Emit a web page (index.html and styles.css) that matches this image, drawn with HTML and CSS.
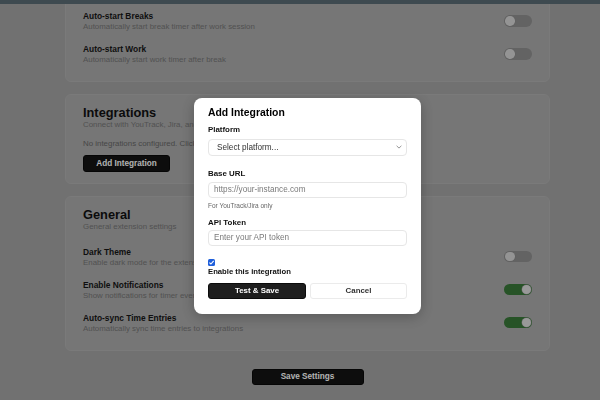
FILE: index.html
```html
<!DOCTYPE html>
<html lang="en">
<head>
<meta charset="utf-8">
<title>Settings</title>
<link rel="stylesheet" href="styles.css">
</head>
<body>
<div class="chrome"></div>
<main class="page">
  <section class="card card-first">
    <div class="rows">
      <div class="row">
        <div class="row-text">
          <div class="row-title">Auto-start Breaks</div>
          <div class="row-desc">Automatically start break timer after work session</div>
        </div>
        <span class="toggle"><span class="knob"></span></span>
      </div>
      <div class="row">
        <div class="row-text">
          <div class="row-title">Auto-start Work</div>
          <div class="row-desc">Automatically start work timer after break</div>
        </div>
        <span class="toggle"><span class="knob"></span></span>
      </div>
    </div>
  </section>

  <section class="card">
    <h2 class="card-title">Integrations</h2>
    <p class="card-desc">Connect with YouTrack, Jira, and more</p>
    <p class="empty-note">No integrations configured. Click below to add one.</p>
    <button class="btn-dark btn-add">Add Integration</button>
  </section>

  <section class="card">
    <h2 class="card-title">General</h2>
    <p class="card-desc">General extension settings</p>
    <div class="rows rows-spaced">
      <div class="row">
        <div class="row-text">
          <div class="row-title">Dark Theme</div>
          <div class="row-desc">Enable dark mode for the extension</div>
        </div>
        <span class="toggle"><span class="knob"></span></span>
      </div>
      <div class="row">
        <div class="row-text">
          <div class="row-title">Enable Notifications</div>
          <div class="row-desc">Show notifications for timer events</div>
        </div>
        <span class="toggle on"><span class="knob"></span></span>
      </div>
      <div class="row">
        <div class="row-text">
          <div class="row-title">Auto-sync Time Entries</div>
          <div class="row-desc">Automatically sync time entries to integrations</div>
        </div>
        <span class="toggle on"><span class="knob"></span></span>
      </div>
    </div>
  </section>

  <div class="actions">
    <button class="btn-dark btn-save">Save Settings</button>
  </div>
</main>

<div class="overlay">
  <div class="modal">
    <h3 class="modal-title">Add Integration</h3>
    <div class="field-label first">Platform</div>
    <div class="select">
      <span>Select platform...</span>
      <svg class="chev" width="6" height="4" viewBox="0 0 6 4"><path d="M0.6 0.8 L3 3.1 L5.4 0.8" fill="none" stroke="#8a8a8a" stroke-width="0.9"/></svg>
    </div>
    <div class="field-label">Base URL</div>
    <div class="input placeholder">https://your-instance.com</div>
    <div class="helper">For YouTrack/Jira only</div>
    <div class="field-label api">API Token</div>
    <div class="input placeholder tight">Enter your API token</div>
    <span class="checkbox">
      <svg width="7" height="7" viewBox="0 0 7 7"><path d="M1.4 3.6 L2.9 5 L5.7 1.9" fill="none" stroke="#fff" stroke-width="1.1"/></svg>
    </span>
    <div class="check-label">Enable this integration</div>
    <div class="modal-buttons">
      <button class="mbtn mbtn-primary">Test &amp; Save</button>
      <button class="mbtn mbtn-secondary">Cancel</button>
    </div>
  </div>
</div>
</body>
</html>
```

FILE: styles.css
```css
* { box-sizing: border-box; }
html, body { margin: 0; height: 100%; }
body {
  font-family: "Liberation Sans", Arial, sans-serif;
  background: #a3a3a3;
  overflow: hidden;
  color: #1c1c1c;
}

.chrome {
  position: fixed;
  top: 0; left: 0; right: 0;
  height: 4px;
  background: #3e4a50;
  z-index: 20;
}

.page {
  width: 485px;
  margin-left: 65px;
  display: flex;
  flex-direction: column;
  gap: 12px;
}

.card {
  background: #a9a9a9;
  border: 1px solid #afafaf;
  border-radius: 6px;
  padding: 11px 17px 11px;
}
.card-first { margin-top: -10px; padding-top: 13px; }

.card-title {
  margin: 0;
  font-size: 12.8px;
  line-height: 14px;
  font-weight: 700;
  color: #111;
}
.card-desc {
  margin: 0;
  font-size: 7.9px;
  line-height: 9px;
  color: #757575;
  white-space: nowrap;
}
.empty-note {
  margin: 9.5px 0 0;
  font-size: 7.9px;
  line-height: 9px;
  color: #666;
  white-space: nowrap;
}

.rows-spaced { margin-top: 9px; }
.row {
  display: flex;
  align-items: center;
  justify-content: space-between;
  padding: 7px 0 6px;
}
.row-title {
  font-size: 8.4px;
  line-height: 10px;
  font-weight: 700;
  color: #161616;
  white-space: nowrap;
}
.row-desc {
  margin-top: 1px;
  font-size: 7.9px;
  line-height: 9px;
  color: #757575;
  white-space: nowrap;
}

.toggle {
  position: relative;
  flex: none;
  width: 28px;
  height: 11.5px;
  border-radius: 6px;
  background: #8e8e8e;
}
.toggle .knob {
  position: absolute;
  top: 1px;
  left: 1px;
  width: 9.5px;
  height: 9.5px;
  border-radius: 50%;
  background: #d4d4d4;
  box-shadow: 0 0 0 0.5px #8a8a8a;
}
.toggle.on { background: #387838; }
.toggle.on .knob { left: auto; right: 1px; background: #dcdcdc; }

.btn-dark {
  font-family: inherit;
  font-weight: 700;
  font-size: 8.2px;
  color: #ffffff;
  background: #141414;
  border: 1px solid #0a0a0a;
  border-radius: 3px;
  padding: 0;
  cursor: pointer;
}
.btn-add {
  display: block;
  margin-top: 7px;
  width: 87px;
  height: 17px;
}
.actions {
  display: flex;
  justify-content: center;
  padding-top: 6px;
}
.btn-save {
  width: 112px;
  height: 16.5px;
}

.overlay {
  position: fixed;
  inset: 0;
  background: rgba(0, 0, 0, 0.3);
  display: flex;
  justify-content: center;
  align-items: flex-start;
  padding: 98px 0 0 15px;
  z-index: 10;
}
.modal {
  width: 227px;
  background: #ffffff;
  border-radius: 8px;
  padding: 9px 14px 15px;
  box-shadow: 0 3px 14px rgba(0, 0, 0, 0.25);
}
.modal-title {
  margin: 0;
  font-size: 10.4px;
  line-height: 12px;
  font-weight: 700;
  color: #000;
}
.field-label {
  margin-top: 13.5px;
  font-size: 7.9px;
  line-height: 10px;
  font-weight: 700;
  color: #111;
}
.field-label.first { margin-top: 6px; }
.field-label.api { margin-top: 8px; }

.select, .input {
  height: 16.5px;
  border: 1px solid #e6e6e6;
  border-radius: 4px;
  display: flex;
  align-items: center;
  font-size: 8.2px;
  color: #333;
}
.select {
  margin-top: 4px;
  padding: 0 4px 0 8px;
  justify-content: space-between;
}
.input {
  margin-top: 2.5px;
  height: 16px;
  padding-left: 5px;
}
.input.tight { margin-top: 2px; }
.placeholder { color: #7a7a7a; }

.helper {
  margin-top: 4px;
  font-size: 6.5px;
  line-height: 8px;
  color: #666;
}

.checkbox {
  margin-top: 13px;
  display: flex;
  align-items: center;
  justify-content: center;
  width: 7px;
  height: 7px;
  border-radius: 1.5px;
  background: #1f5fdb;
}
.check-label {
  margin-top: 1px;
  font-size: 7.7px;
  line-height: 10px;
  font-weight: 700;
  color: #111;
}

.modal-buttons {
  margin-top: 6px;
  display: grid;
  grid-template-columns: 98px 1fr;
  gap: 4px;
}
.mbtn {
  height: 16px;
  font-family: inherit;
  font-size: 7.9px;
  font-weight: 700;
  border-radius: 3px;
  padding: 0;
}
.mbtn-primary {
  background: #1e1e1e;
  color: #fff;
  border: 1px solid #0c0c0c;
}
.mbtn-secondary {
  background: #fff;
  color: #333;
  border: 1px solid #ebebeb;
}
```
